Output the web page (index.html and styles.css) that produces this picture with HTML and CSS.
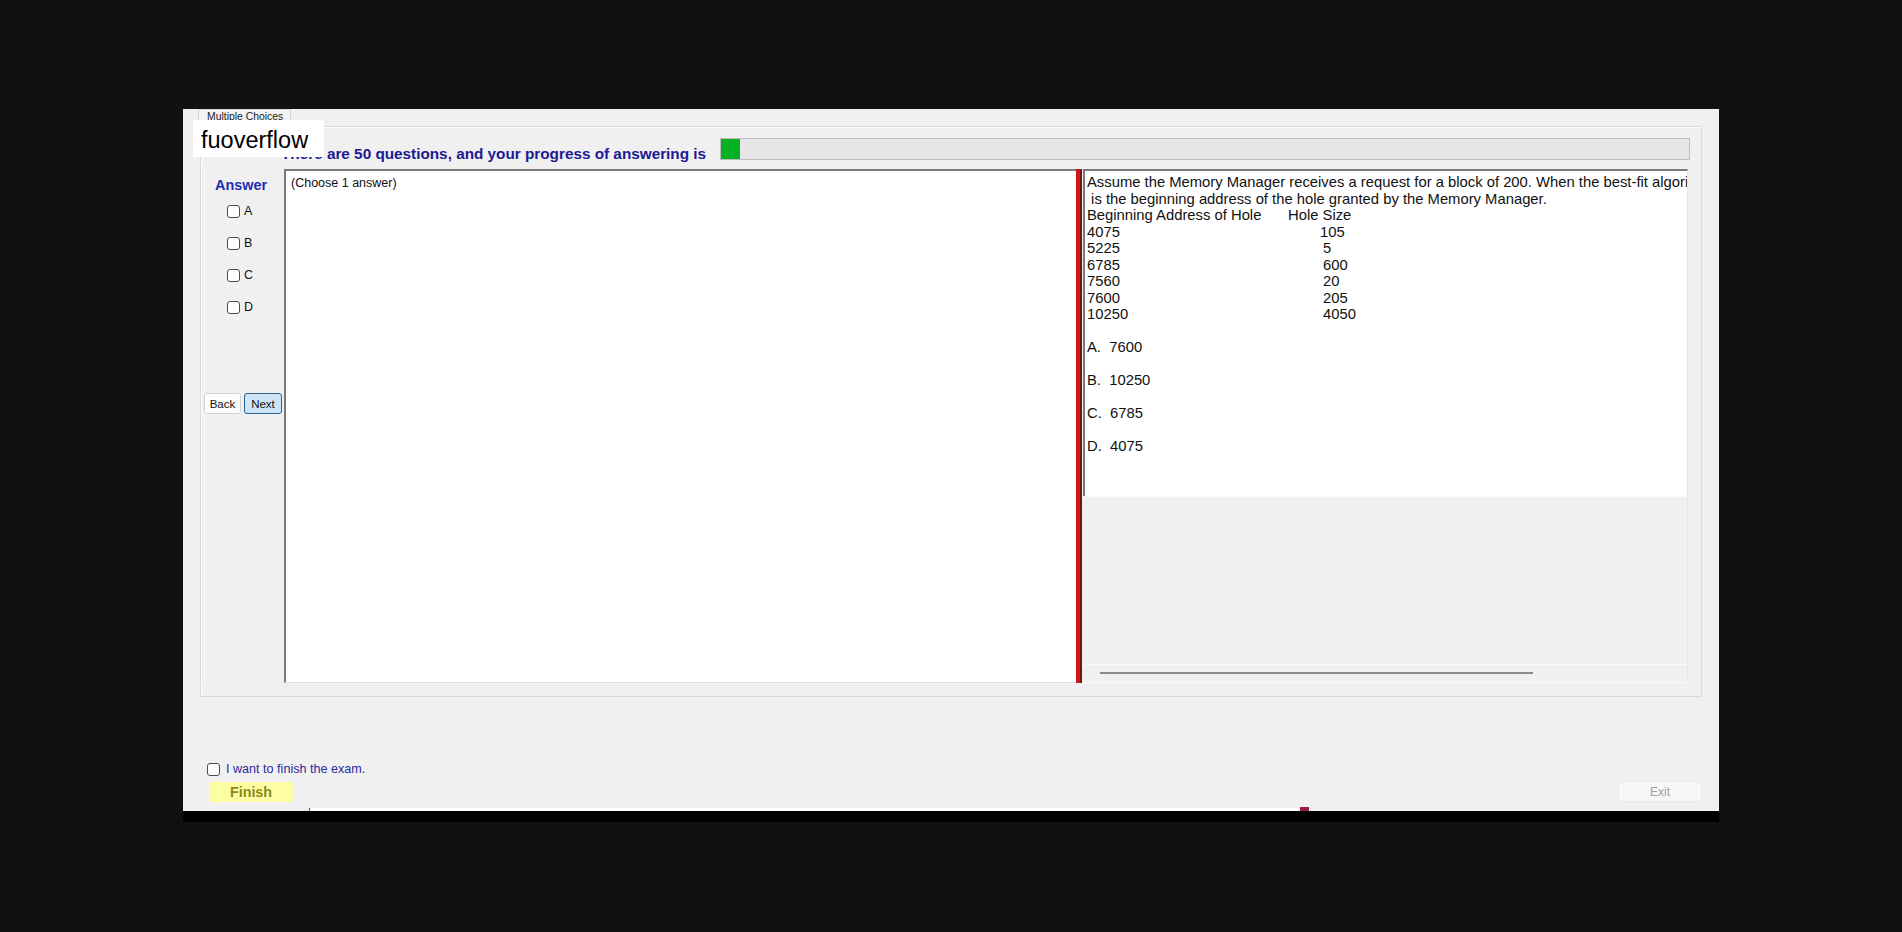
FILE: index.html
```html
<!DOCTYPE html>
<html>
<head>
<meta charset="utf-8">
<title>Multiple Choices</title>
<link rel="stylesheet" href="styles.css">
</head>
<body>
<div class="window">
  <div class="tabs"><div class="tab">Multiple Choices</div></div>
  <div class="panel">
    <div class="head">
      <div class="title">There are 50 questions, and your progress of answering is</div>
      <div class="progress"><div class="fill"></div></div>
    </div>
    <div class="main">
      <div class="side">
        <div class="answer">Answer</div>
        <label class="opt"><span class="box"></span><span>A</span></label>
        <label class="opt"><span class="box"></span><span>B</span></label>
        <label class="opt"><span class="box"></span><span>C</span></label>
        <label class="opt"><span class="box"></span><span>D</span></label>
        <div class="nav">
          <button class="btn back">Back</button>
          <button class="btn next">Next</button>
        </div>
      </div>
      <div class="qbox">(Choose 1 answer)</div>
      <div class="splitter"></div>
      <div class="right">
        <div class="qtext">
          <div class="ln">Assume the Memory Manager receives a request for a block of 200. When the best-fit algorithm is used, what</div>
          <div class="ln"> is the beginning address of the hole granted by the Memory Manager.</div>
          <div class="ln"><span class="col-a">Beginning Address of Hole</span>Hole Size</div>
          <div class="ln"><span class="col-b">4075</span>105</div>
          <div class="ln"><span class="col-c">5225</span>5</div>
          <div class="ln"><span class="col-c">6785</span>600</div>
          <div class="ln"><span class="col-c">7560</span>20</div>
          <div class="ln"><span class="col-c">7600</span>205</div>
          <div class="ln"><span class="col-c">10250</span>4050</div>
          <div class="ln"> </div>
          <div class="ln">A.  7600</div>
          <div class="ln"> </div>
          <div class="ln">B.  10250</div>
          <div class="ln"> </div>
          <div class="ln">C.  6785</div>
          <div class="ln"> </div>
          <div class="ln">D.  4075</div>
        </div>
        <div class="grey"></div>
        <div class="hscroll"><div class="thumb"></div></div>
      </div>
    </div>
  </div>
  <div class="footer">
    <div class="foot-left">
      <label class="finish-check"><span class="box"></span><span>I want to finish the exam.</span></label>
      <button class="finish">Finish</button>
    </div>
    <button class="exit">Exit</button>
  </div>
  <div class="status"><div class="strip"></div><div class="mark"></div></div>
</div>
<div class="blackbar"></div>
<div class="watermark">fuoverflow</div>
</body>
</html>
```
FILE: styles.css
```css
html, body {
  margin: 0;
  padding: 0;
}
body {
  background: #111111;
  padding: 109px 0 0 183px;
  width: 1902px;
  height: 932px;
  box-sizing: border-box;
  overflow: hidden;
  font-family: "Liberation Sans", Arial, sans-serif;
  color: #000;
}
.window {
  width: 1536px;
  height: 702px;
  background: #f0f0f0;
  display: flex;
  flex-direction: column;
}
.tabs {
  height: 17px;
  display: flex;
}
.tab {
  margin-left: 15px;
  width: 93px;
  height: 17px;
  box-sizing: border-box;
  border: 1px solid #d6d6d6;
  border-bottom: none;
  background: #f4f4f4;
  font-size: 10.4px;
  line-height: 14px;
  padding-left: 8px;
  color: #222;
}
.panel {
  margin-left: 17px;
  width: 1502px;
  height: 571px;
  box-sizing: border-box;
  border: 1px solid #dadada;
  box-shadow: inset 1px 1px 0 #fbfbfb;
  padding: 11px 11px 0 0;
  display: flex;
  flex-direction: column;
}
.head {
  display: flex;
  height: 22px;
  align-items: center;
}
.title {
  margin-left: 80px;
  width: 439px;
  font-weight: bold;
  font-size: 15.3px;
  color: #1c1a94;
  white-space: nowrap;
  padding-top: 10px;
}
.progress {
  flex: 1;
  height: 22px;
  box-sizing: border-box;
  border: 1px solid #bcbcbc;
  background: #e6e6e6;
}
.fill {
  width: 19px;
  height: 20px;
  background: #06b025;
}
.main {
  margin-top: 9px;
  height: 514px;
  display: flex;
}
.side {
  width: 79px;
  margin-left: 3px;
  border-left: 1px solid #fafafa;
  display: flex;
  flex-direction: column;
}
.answer {
  margin: 7px 0 0 10px;
  font-weight: bold;
  font-size: 14.4px;
  line-height: 18px;
  color: #1f2bb0;
}
.opt {
  height: 32px;
  display: flex;
  align-items: center;
  margin-left: 22px;
  font-size: 12.5px;
  color: #111;
}
.opt:first-of-type {
  margin-top: 1px;
}
.box {
  width: 13px;
  height: 13px;
  box-sizing: border-box;
  border: 1px solid #4a4a4a;
  border-radius: 3px;
  background: #fff;
  margin-right: 4px;
}
.nav {
  margin-top: 70px;
  display: flex;
  gap: 3px;
}
.btn {
  height: 21px;
  box-sizing: border-box;
  font-family: "Liberation Sans", Arial, sans-serif;
  font-size: 11.5px;
  padding: 0;
  border-radius: 3px;
  color: #111;
}
.back {
  width: 37px;
  margin-left: -1px;
  background: #fdfdfd;
  border: 1px solid #d2d2d2;
}
.next {
  width: 38px;
  background: #cce4f7;
  border: 1px solid #2f5f8a;
}
.qbox {
  width: 792px;
  height: 514px;
  box-sizing: border-box;
  background: #fff;
  border-top: 2px solid #7a7a7a;
  border-left: 2px solid #7a7a7a;
  border-bottom: 1px solid #e2e2e2;
  padding: 5px 5px;
  font-size: 12.5px;
  line-height: 15px;
  color: #111;
}
.splitter {
  width: 6px;
  height: 514px;
  background: linear-gradient(to right, #c81414 0, #d41818 4px, #7d1010 4px, #7d1010 6px);
}
.right {
  flex: 1;
  display: flex;
  flex-direction: column;
  margin-left: 1px;
}
.qtext {
  height: 327px;
  box-sizing: border-box;
  width: 605px;
  background: #fff;
  border-top: 2px solid #7a7a7a;
  border-left: 2px solid #7a7a7a;
  border-right: 1px solid #e6e6e6;
  padding: 3px 0 0 2px;
  overflow: hidden;
  font-size: 14.8px;
  line-height: 16.5px;
  color: #111;
}
.ln {
  white-space: pre;
  height: 16.5px;
}
.col-a { display: inline-block; width: 201px; }
.col-b { display: inline-block; width: 233px; }
.col-c { display: inline-block; width: 236px; }
.grey {
  height: 169px;
  width: 605px;
  box-sizing: border-box;
  border-top: 1px solid #fafafa;
  border-bottom: 1px solid #fafafa;
  border-right: 1px solid #e6e6e6;
}
.hscroll {
  height: 18px;
  width: 605px;
  box-sizing: border-box;
  border-bottom: 1px solid #fafafa;
  border-right: 1px solid #e6e6e6;
  padding: 7px 0 0 17px;
}
.thumb {
  width: 433px;
  height: 2px;
  background: #8a8a8a;
}
.footer {
  height: 108px;
  box-sizing: border-box;
  padding: 0 17px 3px 24px;
  display: flex;
  justify-content: space-between;
  align-items: flex-end;
}
.foot-left {
  display: flex;
  flex-direction: column;
  gap: 5px;
}
.finish-check {
  display: flex;
  align-items: center;
  height: 16px;
  font-size: 12.6px;
  color: #29299b;
}
.finish-check .box {
  margin-right: 6px;
}
.finish {
  margin-left: 2px;
  width: 84px;
  height: 20px;
  border: none;
  border-radius: 2px;
  background: #fdfda4;
  color: #8a8a1c;
  font-family: "Liberation Sans", Arial, sans-serif;
  font-weight: bold;
  font-size: 14.3px;
  padding: 0;
}
.exit {
  width: 84px;
  height: 21px;
  border: 1px solid #ebebeb;
  border-radius: 3px;
  background: #f7f7f7;
  color: #a0a0a0;
  font-family: "Liberation Sans", Arial, sans-serif;
  font-size: 12px;
  padding: 0;
}
.status {
  height: 6px;
  display: flex;
  align-items: flex-end;
}
.strip {
  margin-left: 126px;
  width: 988px;
  height: 3px;
  background: #fff;
  border-left: 1px solid #555;
}
.mark {
  margin-left: 2px;
  width: 9px;
  height: 4px;
  background: #9c1c48;
}
.blackbar {
  width: 1536px;
  height: 11px;
  background: #000;
}
.watermark {
  position: absolute;
  left: 193px;
  top: 120px;
  width: 131px;
  height: 37px;
  box-sizing: border-box;
  background: #fff;
  padding: 4px 0 0 8px;
  font-size: 23.5px;
  line-height: 33px;
  color: #000;
}
```
